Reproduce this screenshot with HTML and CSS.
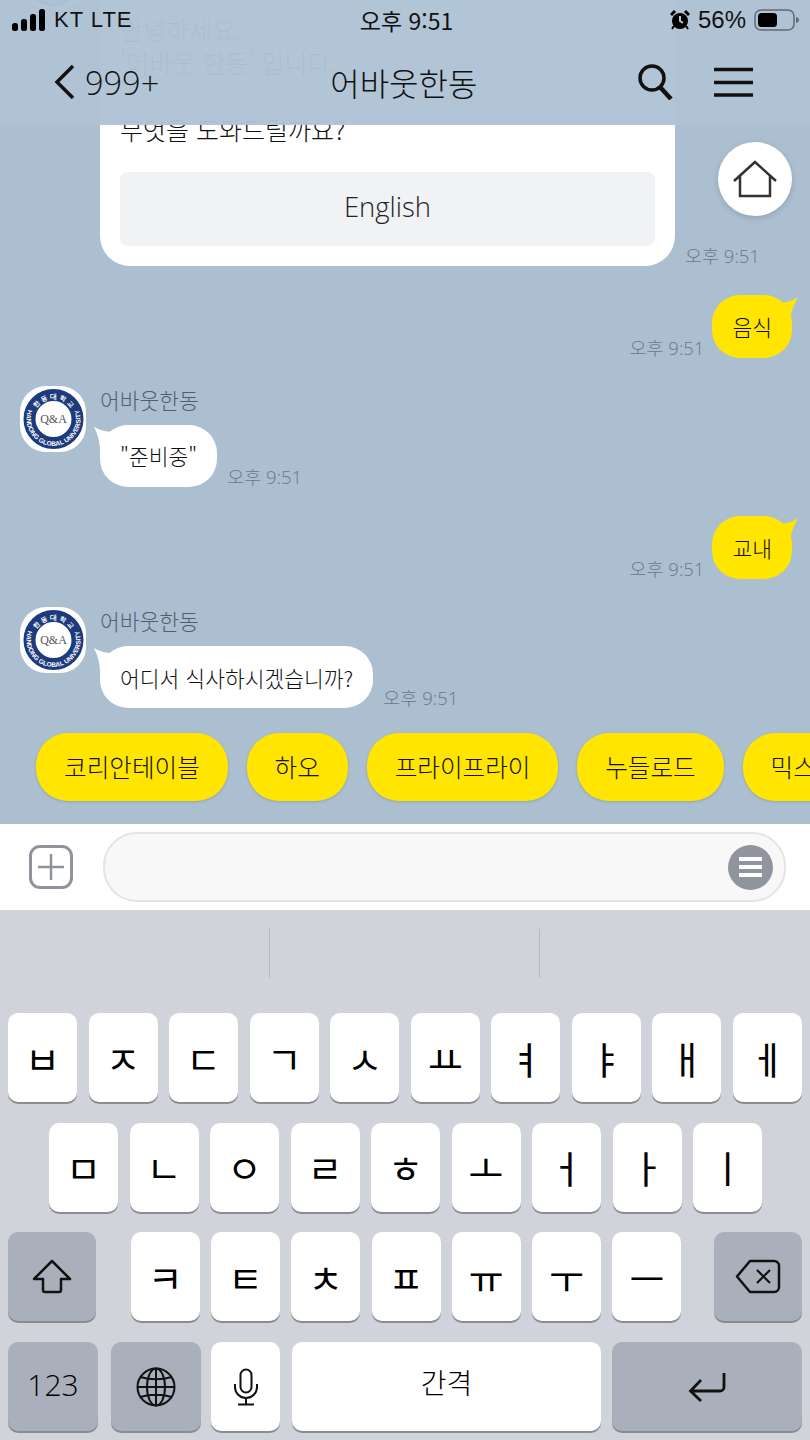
FILE: index.html
```html
<!DOCTYPE html>
<html lang="ko">
<head>
    <meta charset="UTF-8">
    <meta name="viewport" content="width=device-width, initial-scale=1.0">
    <title>어바웃한동</title>
    <link rel="stylesheet" href="styles.css">
</head>
<body>

<svg class="defs" width="0" height="0">
    <symbol id="logo" viewBox="0 0 68 68">
        <rect x="1" y="1" width="66" height="66" rx="26" fill="#fff"/>
        <circle cx="34.500" cy="34" r="24" fill="none" stroke="#1c3a7c" stroke-width="12"/>
        <path id="arcTop" d="M14 34a20.500 20.500 0 0 1 41 0" fill="none"/>
        <path id="arcBottom" d="M11.100 20.500A27 27 0 1 0 57.900 20.500" fill="none"/>
        <text class="logo-ring"><textPath href="#arcTop" startOffset="50%" text-anchor="middle">한 동 대 학 교</textPath></text>
        <text class="logo-ring"><textPath href="#arcBottom" startOffset="50%" text-anchor="middle">HANDONG GLOBAL UNIVERSITY</textPath></text>
        <text class="logo-name" x="34.500" y="38" text-anchor="middle">Q&amp;A</text>
    </symbol>
</svg>

<div class="screen">
    <main class="chat">
        <div class="messages">
            <div class="msg-bot">
                <svg class="avatar"><use href="#logo"/></svg>
                <div class="msg-body">
                    <div class="name">어바웃한동</div>
                    <div class="msg-line">
                        <div class="card">
                            <p class="card-text">안녕하세요.<br>'어바웃 한동' 입니다.<br><br>무엇을 도와드릴까요?</p>
                            <div class="card-btn">English</div>
                        </div>
                        <span class="time">오후 9:51</span>
                    </div>
                </div>
            </div>

            <div class="msg-user">
                <span class="time">오후 9:51</span>
                <div class="bubble bubble-user">음식</div>
            </div>

            <div class="msg-bot">
                <svg class="avatar"><use href="#logo"/></svg>
                <div class="msg-body">
                    <div class="name">어바웃한동</div>
                    <div class="msg-line">
                        <div class="bubble bubble-bot">"준비중"</div>
                        <span class="time">오후 9:51</span>
                    </div>
                </div>
            </div>

            <div class="msg-user">
                <span class="time">오후 9:51</span>
                <div class="bubble bubble-user">교내</div>
            </div>

            <div class="msg-bot">
                <svg class="avatar"><use href="#logo"/></svg>
                <div class="msg-body">
                    <div class="name">어바웃한동</div>
                    <div class="msg-line">
                        <div class="bubble bubble-bot">어디서 식사하시겠습니까?</div>
                        <span class="time">오후 9:51</span>
                    </div>
                </div>
            </div>
        </div>

        <div class="chips">
            <div class="chip">코리안테이블</div>
            <div class="chip">하오</div>
            <div class="chip">프라이프라이</div>
            <div class="chip">누들로드</div>
            <div class="chip">믹스라이스</div>
        </div>

        <header class="top">
            <div class="status">
                <div class="status-left">
                    <svg class="signal" width="34" height="22" viewBox="0 0 34 22">
                        <rect x="0" y="14" width="6" height="8" rx="2.500"/>
                        <rect x="9" y="10" width="6" height="12" rx="2.500"/>
                        <rect x="18" y="5" width="6" height="17" rx="2.500"/>
                        <rect x="27" y="0" width="6" height="22" rx="2.500"/>
                    </svg>
                    <span class="carrier">KT LTE</span>
                </div>
                <div class="status-time">오후 9:51</div>
                <div class="status-right">
                    <svg width="20" height="20" viewBox="0 0 20 20">
                        <circle cx="10" cy="11" r="8"/>
                        <path d="M1 5l4-4M19 5l-4-4" stroke="#000" stroke-width="3"/>
                        <path d="M2 19l2-3M18 19l-2-3" stroke="#000" stroke-width="2"/>
                        <path d="M10 6v5l3 2" stroke="#b0c4d6" stroke-width="2" fill="none"/>
                    </svg>
                    <span class="battery-text">56%</span>
                    <svg width="47" height="22" viewBox="0 0 47 22">
                        <rect x="1" y="1" width="39" height="20" rx="6" fill="none" stroke="#5f6a75" stroke-width="1.500"/>
                        <rect x="4" y="4" width="19" height="14" rx="3.500"/>
                        <path d="M42 8c2 .5 3 1.500 3 3s-1 2.500-3 3z" fill="#5f6a75"/>
                    </svg>
                </div>
            </div>
            <div class="nav">
                <svg class="nav-back" width="22" height="36" viewBox="0 0 22 36">
                    <path d="M19 2L3 18l16 16" fill="none" stroke="#111" stroke-width="3.500"/>
                </svg>
                <span class="nav-count">999+</span>
                <h1 class="nav-title">어바웃한동</h1>
                <svg class="nav-search" width="36" height="36" viewBox="0 0 36 36">
                    <circle cx="15" cy="14" r="12" fill="none" stroke="#111" stroke-width="3.500"/>
                    <path d="M23 23l11 12" stroke="#111" stroke-width="4.500"/>
                </svg>
                <svg class="nav-menu" width="40" height="30" viewBox="0 0 40 30">
                    <path d="M0 2.500h39M0 15.500h39M0 28h39" stroke="#111" stroke-width="3.500"/>
                </svg>
            </div>
        </header>

        <div class="home">
            <svg width="46" height="38" viewBox="0 0 46 38">
                <path d="M2 21L23 2l21 19M8 16v20h30V16" fill="none" stroke="#333" stroke-width="2.500"/>
            </svg>
        </div>
    </main>

    <div class="input-bar">
        <div class="plus">
            <svg width="26" height="28" viewBox="0 0 26 28">
                <path d="M13 1v26M0 14h26" stroke="#8f939c" stroke-width="2.500"/>
            </svg>
        </div>
        <div class="input-box">
            <div class="input-menu"><span></span><span></span><span></span></div>
        </div>
    </div>

    <div class="keyboard">
        <div class="suggest">
            <div class="suggest-cell"></div>
            <div class="suggest-cell"></div>
            <div class="suggest-cell"></div>
        </div>
        <div class="keys">
            <div class="row">
                <div class="key">ㅂ</div><div class="key">ㅈ</div><div class="key">ㄷ</div><div class="key">ㄱ</div><div class="key">ㅅ</div>
                <div class="key">ㅛ</div><div class="key">ㅕ</div><div class="key">ㅑ</div><div class="key">ㅐ</div><div class="key">ㅔ</div>
            </div>
            <div class="row row-home">
                <div class="key">ㅁ</div><div class="key">ㄴ</div><div class="key">ㅇ</div><div class="key">ㄹ</div><div class="key">ㅎ</div>
                <div class="key">ㅗ</div><div class="key">ㅓ</div><div class="key">ㅏ</div><div class="key">ㅣ</div>
            </div>
            <div class="row row-shift">
                <div class="key key-grey key-side">
                    <svg width="40" height="35" viewBox="0 0 40 35">
                        <path d="M20 2L38 20H29V31a2 2 0 0 1-2 2H13a2 2 0 0 1-2-2V20H2z" fill="none" stroke="#111" stroke-width="2.500" stroke-linejoin="round"/>
                    </svg>
                </div>
                <div class="key-group">
                    <div class="key">ㅋ</div><div class="key">ㅌ</div><div class="key">ㅊ</div><div class="key">ㅍ</div>
                    <div class="key">ㅠ</div><div class="key">ㅜ</div><div class="key">ㅡ</div>
                </div>
                <div class="key key-grey key-side">
                    <svg width="46" height="35" viewBox="0 0 46 35">
                        <path d="M15 2h24a5 5 0 0 1 5 5v21a5 5 0 0 1-5 5H15L2 17.500z" fill="none" stroke="#111" stroke-width="2.500" stroke-linejoin="round"/>
                        <path d="M22 11l13 13M35 11L22 24" stroke="#111" stroke-width="2.200"/>
                    </svg>
                </div>
            </div>
            <div class="row row-bottom">
                <div class="key key-grey key-num">123</div>
                <div class="key key-grey key-num key-globe">
                    <svg width="40" height="40" viewBox="0 0 40 40" fill="none" stroke="#111" stroke-width="2">
                        <circle cx="20" cy="20" r="18.500"/>
                        <ellipse cx="20" cy="20" rx="9" ry="18.500"/>
                        <path d="M20 1.500v37M1.500 20h37M4.500 10c9 3 22 3 31 0M4.500 30c9-3 22-3 31 0"/>
                    </svg>
                </div>
                <div class="key key-mic">
                    <svg width="26" height="38" viewBox="0 0 26 38" fill="none" stroke="#111" stroke-width="2">
                        <rect x="7.500" y="1.500" width="11" height="23" rx="5.500"/>
                        <path d="M2 16v3a11 11 0 0 0 22 0v-3M13 30v6M5 36.500h16"/>
                    </svg>
                </div>
                <div class="key key-space">간격</div>
                <div class="key key-grey key-return">
                    <svg width="38" height="30" viewBox="0 0 38 30" fill="none" stroke="#111" stroke-width="2.800">
                        <path d="M36 1v14a4 4 0 0 1-4 4H3M13 8L2.500 19 13 29"/>
                    </svg>
                </div>
            </div>
        </div>
    </div>
</div>

</body>
</html>
```
FILE: styles.css
```css
* {
    box-sizing: border-box;
}

body {
    margin: 0;
    font-family: "Noto Sans CJK KR", "Noto Sans", sans-serif;
    color: #111;
}

.defs {
    position: absolute;
}

.screen {
    width: 810px;
    height: 1440px;
    display: flex;
    flex-direction: column;
    overflow: hidden;
}

/* chat area */
.chat {
    position: relative;
    height: 824px;
    flex-shrink: 0;
    display: flex;
    flex-direction: column;
    background-color: #abbfd1;
    overflow: hidden;
}

.messages {
    flex: 1;
    min-height: 0;
    display: flex;
    flex-direction: column;
    justify-content: flex-end;
}

.msg-bot {
    display: flex;
    flex-shrink: 0;
    gap: 13px;
    padding-left: 19px;
    margin-top: 26.700px;
}

.msg-user {
    display: flex;
    flex-shrink: 0;
    justify-content: flex-end;
    align-items: flex-end;
    gap: 8px;
    padding-right: 18px;
    margin-top: 29.500px;
}

.avatar {
    width: 68px;
    height: 68px;
    flex-shrink: 0;
}

.logo-ring {
    font-family: "Liberation Sans", sans-serif;
    font-size: 6.500px;
    font-weight: bold;
    fill: #fff;
}

.logo-name {
    font-family: "Liberation Serif", serif;
    font-size: 12px;
    fill: #555;
}

.name {
    height: 30px;
    margin-bottom: 10px;
    font-size: 21.500px;
    line-height: 30px;
    font-weight: 300;
    color: #4f5f6e;
}

.msg-line {
    display: flex;
    align-items: flex-end;
    gap: 10px;
}

.time {
    font-family: "Open Sans", "Noto Sans CJK KR", sans-serif;
    font-size: 18.500px;
    line-height: 20px;
    font-weight: 300;
    color: #68798a;
    white-space: nowrap;
}

.bubble {
    position: relative;
    height: 62px;
    display: flex;
    align-items: center;
    padding: 0 20px;
    border-radius: 28px;
    font-size: 21.500px;
    font-weight: 300;
    white-space: nowrap;
}

.bubble::before {
    content: "";
    position: absolute;
    width: 20px;
    height: 26px;
}

.bubble-bot {
    background-color: #fff;
}

.bubble-bot::before {
    left: -6px;
    top: 2px;
    background-color: #fff;
    clip-path: path("M0 0 Q8 5 18 5 L20 26 L6 24 Q6 12 0 0 Z");
}

.bubble-user {
    height: 63px;
    background-color: #ffe500;
}

.bubble-user::before {
    right: -6px;
    top: 2px;
    background-color: #ffe500;
    clip-path: path("M20 0 Q12 5 2 6 L0 26 L12 22 Q14 10 20 0 Z");
}

.card {
    width: 575px;
    padding: 31px 20px 20px;
    background-color: #fff;
    border-radius: 30px;
}

.card-text {
    margin: 0 0 25px;
    font-size: 25px;
    line-height: 33.500px;
    font-weight: 300;
}

.card-btn {
    height: 74px;
    display: flex;
    align-items: center;
    justify-content: center;
    padding-bottom: 5px;
    background-color: #f1f2f4;
    border-radius: 8px;
    font-family: "Open Sans", sans-serif;
    font-size: 27.500px;
    font-weight: 300;
    color: #222;
}

.chips {
    display: flex;
    flex-shrink: 0;
    gap: 18.800px;
    padding: 25px 0 23px 36px;
    overflow: hidden;
}

.chip {
    height: 68px;
    flex-shrink: 0;
    display: flex;
    align-items: center;
    padding: 0 28px 2px;
    background-color: #ffe500;
    border-radius: 32px;
    box-shadow: 0 1px 3px rgba(0, 0, 0, 0.15);
    font-size: 24.600px;
    font-weight: 300;
    white-space: nowrap;
}

/* header lies over the scrolled messages */
.top {
    position: absolute;
    top: 0;
    left: 0;
    width: 100%;
    height: 125px;
    background-color: rgba(175, 195, 213, 0.97);
}

.status {
    height: 40px;
    display: flex;
    align-items: center;
    padding: 0 9px 0 12px;
}

.status-left,
.status-right {
    flex: 1;
    display: flex;
    align-items: center;
}

.status-right {
    justify-content: flex-end;
    gap: 8px;
}

.carrier {
    margin-left: 8px;
    font-family: "Liberation Sans", sans-serif;
    font-size: 22px;
    letter-spacing: 1px;
}

.status-time {
    font-size: 23px;
}

.battery-text {
    font-family: "Liberation Sans", sans-serif;
    font-size: 24px;
}

.nav {
    display: flex;
    align-items: center;
    height: 84px;
    padding: 0 56px 0 54px;
}

.nav-back {
    flex-shrink: 0;
}

.nav-count {
    margin-left: 9px;
    font-family: "Open Sans", sans-serif;
    font-size: 32.500px;
    font-weight: 300;
}

.nav-title {
    margin: 0 auto 0 171px;
    font-size: 32px;
    font-weight: 300;
}

.nav-menu {
    margin-left: 41px;
}

.home {
    position: absolute;
    top: 142px;
    right: 18px;
    width: 74px;
    height: 74px;
    display: flex;
    align-items: center;
    justify-content: center;
    background-color: #fff;
    border-radius: 50%;
    box-shadow: 0 2px 6px rgba(0, 0, 0, 0.15);
}

/* input */
.input-bar {
    height: 86px;
    flex-shrink: 0;
    display: flex;
    align-items: center;
    gap: 30px;
    padding: 0 24px 0 29px;
    background-color: #fff;
}

.plus {
    width: 44px;
    height: 44px;
    flex-shrink: 0;
    display: flex;
    align-items: center;
    justify-content: center;
    border: 3px solid #8f939c;
    border-radius: 11px;
}

.input-box {
    flex: 1;
    height: 70px;
    display: flex;
    align-items: center;
    justify-content: flex-end;
    padding-right: 11px;
    background-color: #f8f8f8;
    border: 2px solid #e4e4e4;
    border-radius: 34px;
}

.input-menu {
    width: 45px;
    height: 45px;
    display: flex;
    flex-direction: column;
    align-items: center;
    justify-content: center;
    gap: 4px;
    background-color: #8f949e;
    border-radius: 50%;
}

.input-menu span {
    width: 23px;
    height: 4px;
    background-color: #fff;
}

/* keyboard */
.keyboard {
    flex: 1;
    background-color: #d0d3da;
}

.suggest {
    height: 103px;
    display: grid;
    grid-template-columns: 270px 270px 1fr;
    padding-top: 19px;
}

.suggest-cell {
    height: 49px;
    border-right: 1.500px solid #b5b8c1;
}

.suggest-cell:last-child {
    border-right: none;
}

.keys {
    display: flex;
    flex-direction: column;
    gap: 20.700px;
    padding: 0 8px;
}

.row {
    display: flex;
    justify-content: space-between;
    height: 89px;
}

.row-home {
    padding: 0 40px 0 41px;
}

.key-group {
    display: flex;
    gap: 11.300px;
    margin-left: 2px;
}

.key {
    width: 69px;
    height: 89px;
    flex-shrink: 0;
    display: flex;
    align-items: center;
    justify-content: center;
    background-color: #fff;
    border-radius: 10px;
    box-shadow: 0 2px 0 #8a8c92;
    font-size: 38px;
    line-height: 1;
    color: #000;
}

.key-grey {
    background-color: #aab0bb;
}

.key-side {
    width: 88px;
}

.row-bottom {
    gap: 11px;
}

.key-num {
    width: 90px;
    padding-bottom: 3px;
    font-family: "Open Sans", sans-serif;
    font-size: 30px;
    font-weight: 300;
}

.key-globe {
    margin-left: 2px;
    padding-bottom: 0;
}

.key-mic {
    margin-left: -1px;
}

.key-space {
    flex: 1;
    margin-left: 1px;
    padding-bottom: 10px;
    font-size: 28px;
    font-weight: 300;
}

.key-return {
    width: 190px;
}
```
